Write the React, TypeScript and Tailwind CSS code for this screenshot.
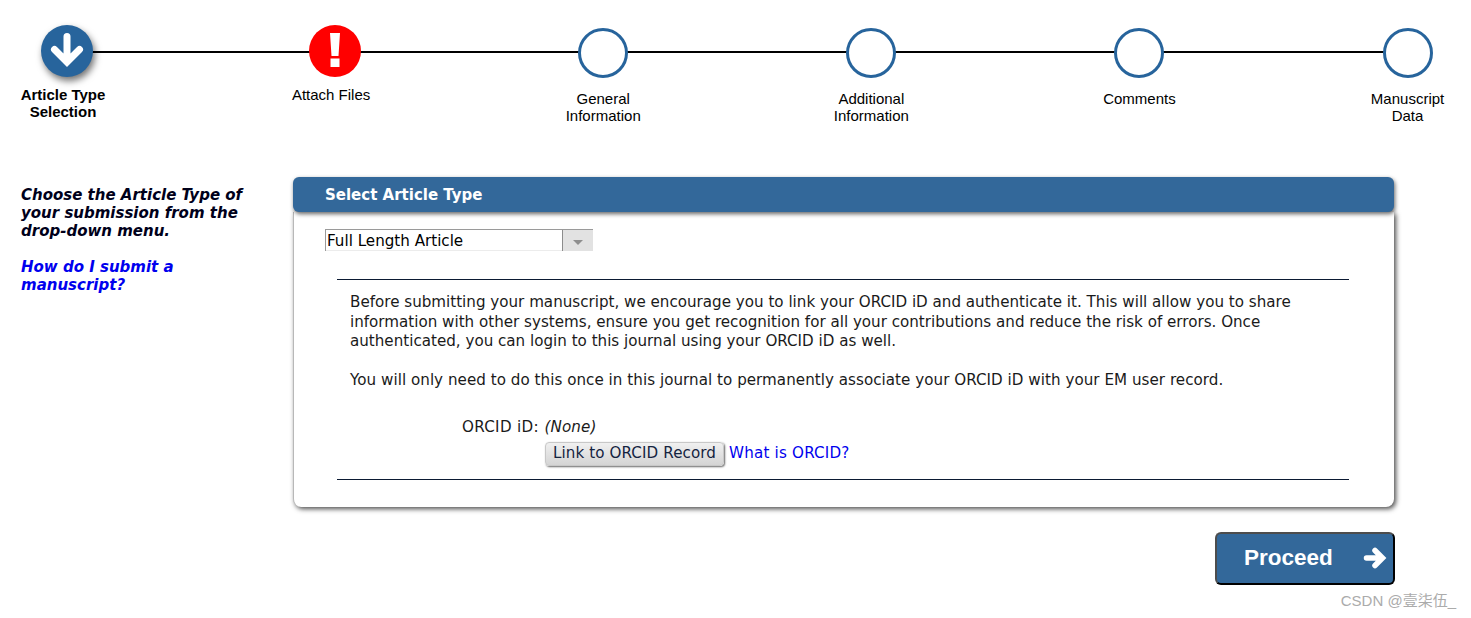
const STEPS = [
  { label: ["General", "Information"] },
  { label: ["Additional", "Information"] },
  { label: ["Comments"] },
  { label: ["Manuscript", "Data"] },
];

function Stepper() {
  return (
    <div className="relative flex justify-between pl-[17px] pr-[13.400px] pt-[25px] h-[172px] font-['Liberation_Sans',Arial,sans-serif] text-[15px] leading-[17px] text-black">
      <div className="absolute left-[67px] right-[63px] top-[51px] h-[2px] bg-black" />

      <div className="relative w-[100px] flex flex-col items-center">
        <div className="w-[52px] h-[52px] rounded-full bg-[#27649c] flex items-center justify-center shadow-[2px_4px_7px_rgba(0,0,0,0.55)]">
          <svg width="40" height="40" viewBox="0 0 40 40">
            <path d="M20 5.500v25M7.500 18.500 20 31l12.500-12.500" fill="none" stroke="#fff" strokeWidth="7" strokeLinecap="round" strokeLinejoin="miter" />
          </svg>
        </div>
        <div className="mt-[9px] -ml-[8px] text-center font-bold">
          Article Type
          <br />
          Selection
        </div>
      </div>

      <div className="relative w-[100px] flex flex-col items-center">
        <div className="w-[52px] h-[52px] rounded-full bg-[#ff0000] flex items-center justify-center">
          <svg width="14" height="36" viewBox="0 0 14 36">
            <path d="M2 0h10l-1.500 23h-7zM2.500 25.500h9V34h-9z" fill="#fff" />
          </svg>
        </div>
        <div className="mt-[9px] -ml-[8px] text-center">Attach Files</div>
      </div>

      {STEPS.map((s) => (
        <div key={s.label[0]} className="relative w-[100px] flex flex-col items-center pt-[3px]">
          <div className="w-[50px] h-[50px] rounded-full bg-white border-[3px] border-[#27649c]" />
          <div className="mt-[12px] text-center">
            {s.label.map((l) => (
              <div key={l}>{l}</div>
            ))}
          </div>
        </div>
      ))}
    </div>
  );
}

function OrcidBlock() {
  return (
    <div className="mt-[28px] ml-[43px] mr-[45px] border-y border-[#0b1a33] pt-[13px] pb-[13px] pl-[13px] pr-[40px] text-[15.130px] leading-[19.500px] text-[#1a1a1a]">
      <p>
        Before submitting your manuscript, we encourage you to link your ORCID iD and authenticate it. This will allow you to share information with other systems, ensure you get recognition for all your contributions and reduce the risk of errors. Once authenticated, you can login to this journal using your ORCID iD as well.
      </p>
      <p className="mt-[19.500px] tracking-[0.035px]">
        You will only need to do this once in this journal to permanently associate your ORCID iD with your EM user record.
      </p>
      <div className="mt-[27px] pl-[112px]">
        <span className="tracking-[0.300px]">ORCID iD:</span> <i className="ml-[1px] tracking-[0.100px]">(None)</i>
      </div>
      <div className="mt-[5px] pl-[195px] flex items-center">
        <button className="h-[24px] w-[179px] rounded-[4px] border border-[#c8c8c8] bg-gradient-to-b from-[#f0f0f0] to-[#d4d4d4] text-[#14233f] tracking-[0.100px] shadow-[1px_1px_2px_rgba(0,0,0,0.6)] leading-none">
          Link to ORCID Record
        </button>
        <a className="ml-[5px] text-[#0000ee] tracking-[0.200px]">What is ORCID?</a>
      </div>
    </div>
  );
}

export default function App() {
  return (
    <div className="relative h-[618px] bg-white overflow-hidden font-['DejaVu_Sans',Verdana,sans-serif]">
      <Stepper />

      <div className="flex pt-[5px]">
        <div className="w-[293px] pl-[21px] pr-[40px] pt-[9px] text-[15px] leading-[18px] italic font-bold text-[#00001a]">
          <p>Choose the Article Type of your submission from the drop-down menu.</p>
          <a className="block mt-[18px] text-[#0000ee]">How do I submit a manuscript?</a>
        </div>

        <div className="w-[1102px]">
          <div className="relative z-10 mr-[1px] h-[35px] rounded-[6px] bg-[#33689a] pl-[32px] pt-[1px] flex items-center text-[15px] font-bold text-white shadow-[1px_2px_4px_rgba(0,0,0,0.6)]">
            Select Article Type
          </div>
          <div className="mr-[1px] h-[295px] rounded-b-[8px] bg-white shadow-[2px_2px_5px_rgba(0,0,0,0.7)] border-l border-[#b8b8b8] pt-[17px]">
            <div className="ml-[31px] w-[268px] h-[22px] flex border-t border-l border-[#9a9a9a] border-b-[#e8e8e8] text-[15.130px] leading-[23px] text-black">
              <div className="flex-1 pl-[1px] border-b border-[#ececec]">Full Length Article</div>
              <div className="w-[31px] bg-[#e2e2e2] border-l border-[#8c8c8c] flex items-center justify-center">
                <div className="mt-[3px] w-0 h-0 border-x-[5px] border-x-transparent border-t-[5px] border-t-[#8f8f8f]" />
              </div>
            </div>
            <OrcidBlock />
          </div>
          <div className="flex justify-end mt-[25px]">
            <button className="w-[180px] h-[53px] pb-[2px] rounded-[6px] bg-[#33689a] border-2 border-[#4d4d4d] border-r-black border-b-black font-['Liberation_Sans',Arial,sans-serif] font-bold text-[22.500px] text-white flex items-center pl-[27px]">
              Proceed
              <svg className="ml-[30px]" width="24" height="24" viewBox="0 0 24 24">
                <path d="M3.500 12h15M12 4.500l7.500 7.500-7.500 7.500" fill="none" stroke="#fff" strokeWidth="5.500" strokeLinecap="round" />
              </svg>
            </button>
          </div>
        </div>
      </div>

      <div className="absolute right-[15px] top-[592px] font-['Liberation_Sans','Noto_Sans_CJK_SC',sans-serif] text-[15px] leading-[18px] text-[#ababab]">
        CSDN @壹柒伍_
      </div>
    </div>
  );
}
